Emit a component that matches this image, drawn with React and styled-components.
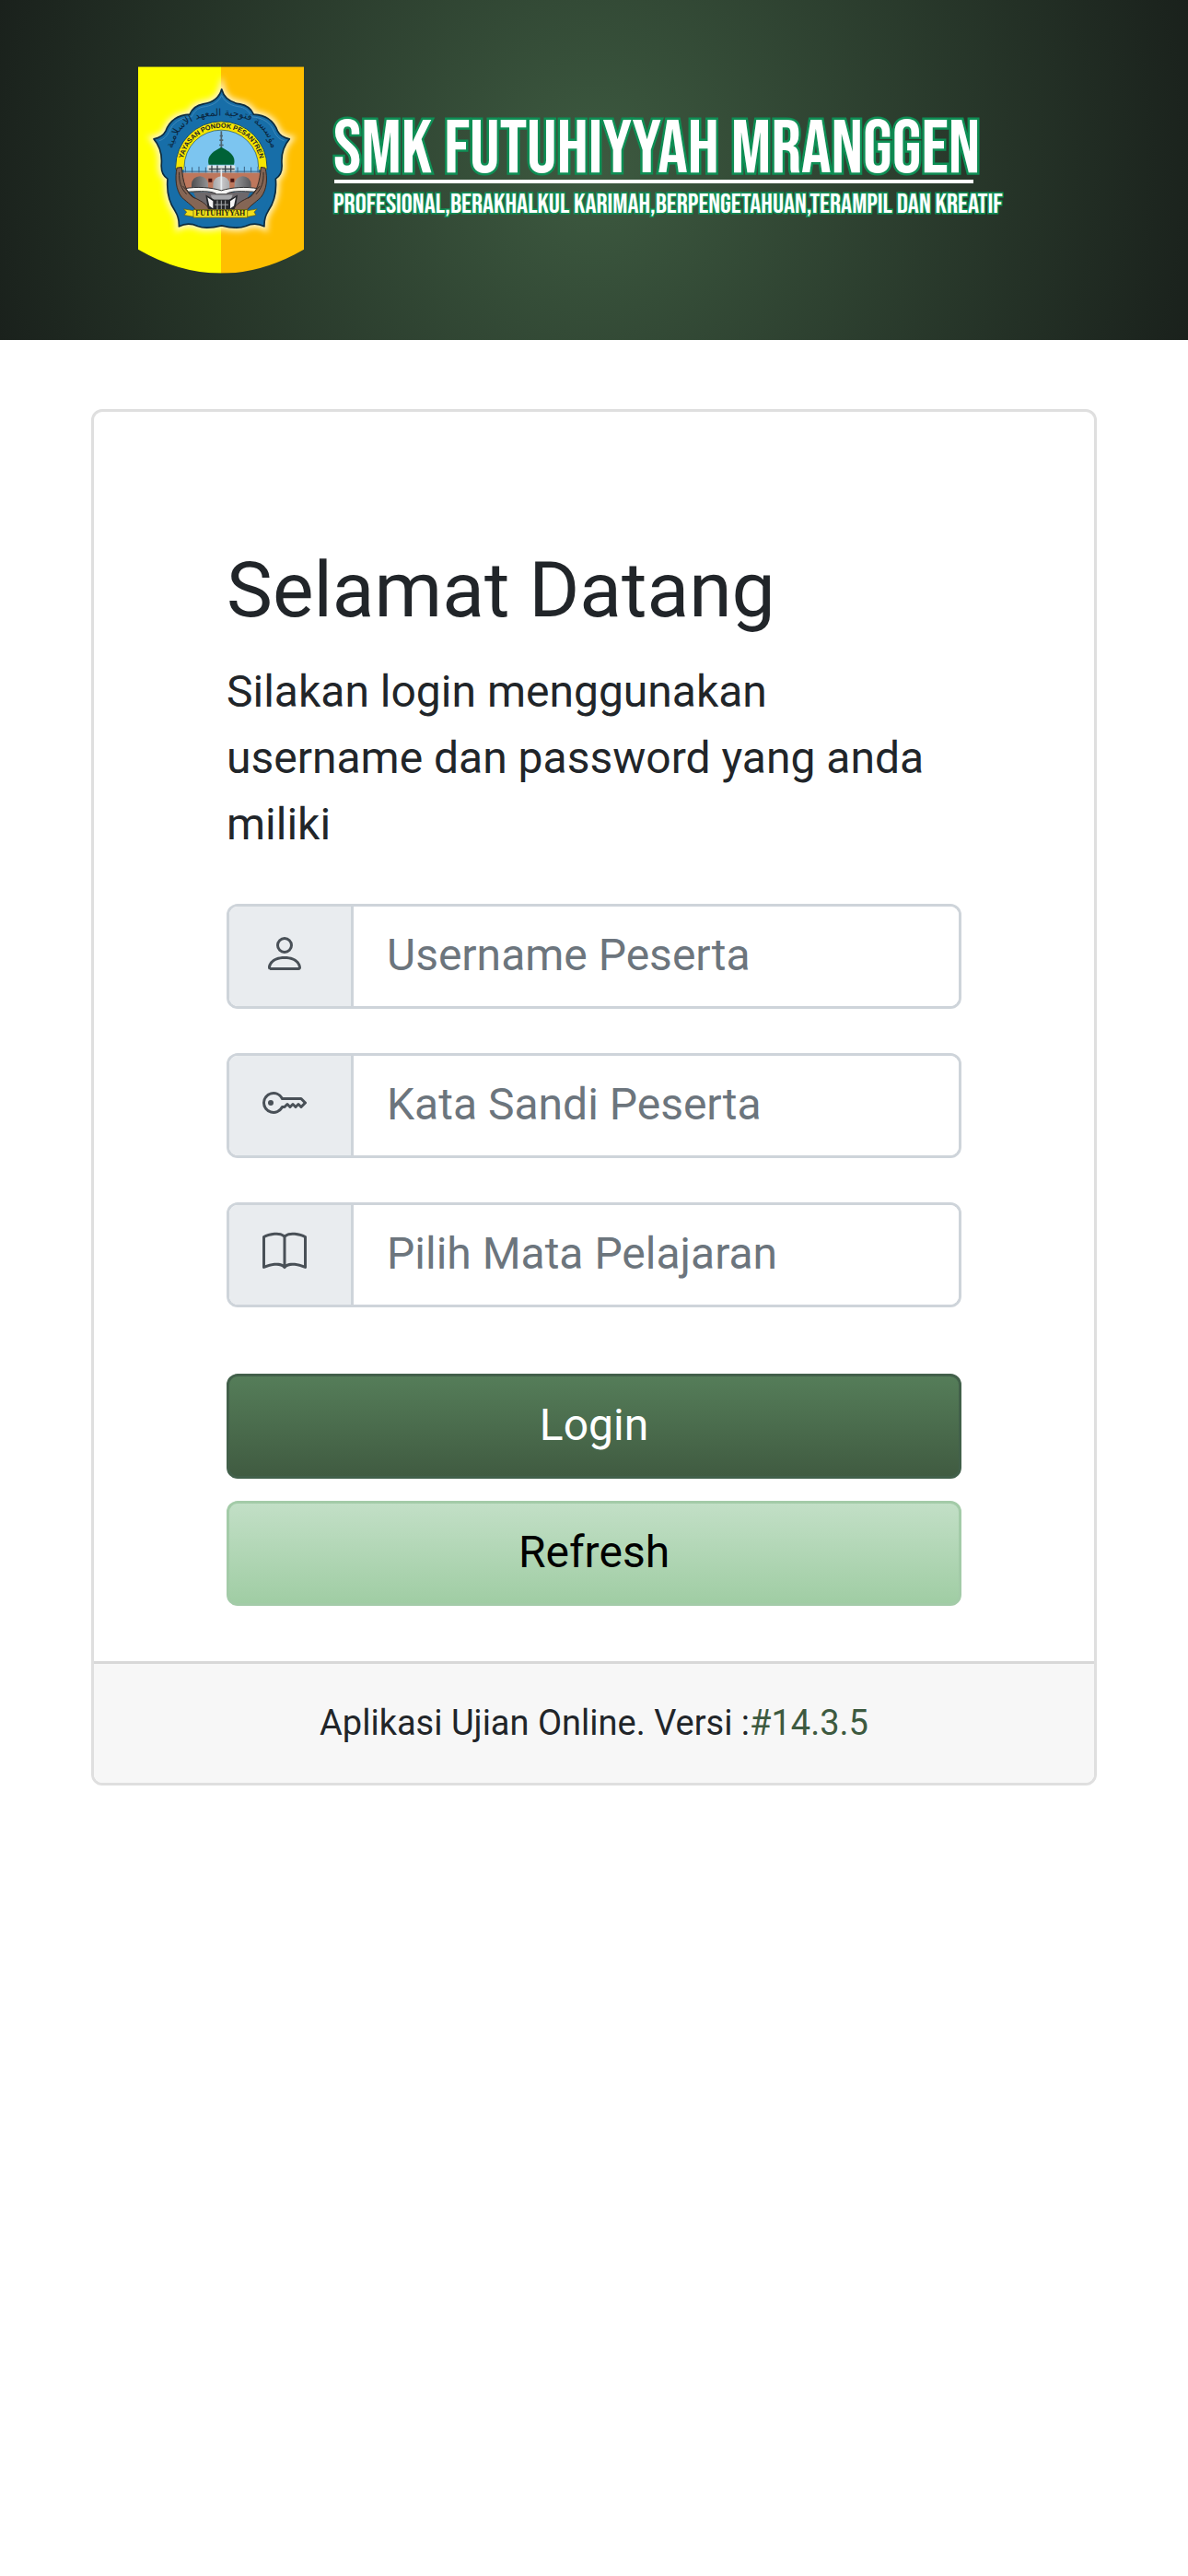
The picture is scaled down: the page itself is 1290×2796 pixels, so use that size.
import React from 'react';
import styled, { createGlobalStyle } from 'styled-components';
import { BsBook, BsKey, BsPerson } from 'react-icons/bs';

const GlobalStyle = createGlobalStyle`
  *,
  *::before,
  *::after {
    box-sizing: border-box;
  }

  body {
    margin: 0;
    background: #fff;
    color: #212529;
    font-family: Roboto, 'Liberation Sans', sans-serif;
    font-size: 48px;
    line-height: 72px;
  }
`;

const Header = styled.header`
  background: radial-gradient(circle, #3d5a40 0%, #1a211c 100%);
  display: flex;
  gap: 32px;
  padding: 72px 150px;
`;

const Emblem = styled.svg`
  display: block;
  flex: none;
  height: 225px;
  width: 180px;
`;

const Brand = styled.div`
  display: flex;
  flex-direction: column;
  font-family: 'Bebas Neue', 'Roboto Condensed', sans-serif;
  padding-top: 58px;
  white-space: nowrap;
`;

const SchoolName = styled.div`
  color: #fff;
  font-size: 81px;
  line-height: 65px;
  paint-order: stroke fill;
  -webkit-text-stroke: 5px #0e8f55;
`;

const Rule = styled.div`
  background: #fff;
  height: 4px;
  margin-left: 1px;
  width: 694px;
`;

const Motto = styled.div`
  color: #fff;
  font-size: 30px;
  line-height: 46px;
  paint-order: stroke fill;
  -webkit-text-stroke: 3px #0e8f55;
`;

const Card = styled.main`
  border: 3px solid #dfdfdf;
  border-radius: 12px;
  margin: 75px 99px 0;
  overflow: hidden;
`;

const LoginForm = styled.form`
  padding: 144px 144px 60px;
`;

const Title = styled.h1`
  font-size: 84px;
  font-weight: 400;
  line-height: 100px;
  margin: 0 0 24px;
`;

const Intro = styled.p`
  margin: 0 0 50px;
`;

const InputGroup = styled.div`
  border: 3px solid #ced4da;
  border-radius: 12px;
  display: flex;
  height: 114px;
  margin-bottom: 48px;
  overflow: hidden;
`;

const Addon = styled.label`
  background: #e9ecef;
  border-right: 3px solid #ced4da;
  color: #495057;
  flex: none;
  padding: 27px 0 0 36px;
  width: 135px;

  svg {
    display: block;
    height: 48px;
    width: 48px;
  }
`;

const Input = styled.input`
  background: #fff;
  border: 0;
  color: #212529;
  flex: 1;
  font: inherit;
  min-width: 0;
  outline: 0;
  padding: 0 36px 2px;

  &::placeholder {
    color: #6c757d;
    opacity: 1;
  }
`;

const Actions = styled.div`
  display: grid;
  gap: 24px;
  padding-top: 24px;
`;

const Button = styled.button`
  background: ${({ $primary }) =>
    $primary ? 'linear-gradient(#557d59, #405b41)' : 'linear-gradient(#c2dfc6, #a0cda4)'};
  border: 3px solid ${({ $primary }) => ($primary ? '#42604a' : '#a3cba8')};
  border-radius: 12px;
  color: ${({ $primary }) => ($primary ? '#fff' : '#000')};
  font: inherit;
  height: 114px;
  padding: 0 0 2px;
`;

const Footer = styled.footer`
  background: #f7f7f7;
  border-top: 3px solid #d8d8d8;
  font-size: 38px;
  line-height: 57px;
  padding: 36px 48px;
  text-align: center;
`;

const Version = styled.a`
  color: #3d5a40;
  text-decoration: none;
`;

const fields = [
  { id: 'username', type: 'text', placeholder: 'Username Peserta', Icon: BsPerson },
  { id: 'password', type: 'password', placeholder: 'Kata Sandi Peserta', Icon: BsKey },
  { id: 'mapel', type: 'text', placeholder: 'Pilih Mata Pelajaran', Icon: BsBook },
];

const star =
  'M332 140 C340 170 362 184 392 188 C414 192 428 202 436 222 C476 224 502 244 514 276 C522 292 536 299 553 302 C532 326 526 350 528 382 C530 404 524 422 508 432 C512 476 502 510 484 536 C474 552 470 568 471 587 C450 576 430 577 410 586 C384 596 356 590 332 584 C308 590 280 596 254 586 C234 577 214 576 193 587 C194 568 190 552 180 536 C162 510 152 476 156 432 C140 422 134 404 136 382 C138 350 132 326 111 302 C128 299 142 292 150 276 C162 244 188 224 228 222 C236 202 250 192 272 188 C302 184 324 170 332 140Z';

const SchoolEmblem = () => (
  <Emblem viewBox="60 66 540 674" role="img" aria-label="Yayasan Pondok Pesantren Futuhiyyah">
    <defs>
      <clipPath id="shield">
        <path d="M60 66H600V662Q330 818 60 662Z" />
      </clipPath>
      <filter id="glow" x="-20%" y="-20%" width="140%" height="140%">
        <feGaussianBlur stdDeviation="9" />
      </filter>
      <linearGradient id="arch">
        <stop offset="0" stopColor="#4e4e50" />
        <stop offset=".5" stopColor="#c9c9cb" />
        <stop offset="1" stopColor="#58585a" />
      </linearGradient>
      <path id="ring" d="M207 420A127 127 0 1 1 455 420" />
      <path id="script" d="M168 356C180 250 250 226 332 226S484 250 498 356" />
    </defs>

    <g clipPath="url(#shield)">
      <path fill="#ff0" d="M60 66H330V740H60Z" />
      <path fill="#ffbf00" d="M330 66H600V740H330Z" />
    </g>

    <path d={star} fill="#fff8d8" stroke="#fff4cc" strokeWidth="22" filter="url(#glow)" />
    <path d={star} fill="#176ea8" stroke="#0d2c3d" strokeWidth="5" strokeLinejoin="round" />
    <path
      d="M332 160C344 186 366 194 394 198C412 202 422 214 430 230C468 232 492 250 504 280C510 294 522 304 536 308M332 160C320 186 298 194 270 198C252 202 242 214 234 230C196 232 172 250 160 280C154 294 142 304 128 308"
      fill="none"
      stroke="#3d88ba"
      strokeWidth="3"
    />

    <text fill="#0b2740" fontFamily="'DejaVu Sans', sans-serif" fontSize="32" textAnchor="middle">
      <textPath href="#script" startOffset="50%">
        مؤسسة فتوحية المعهد الاسلامية
      </textPath>
    </text>

    <circle cx="331" cy="394" r="149" fill="#f7e600" stroke="#12496d" strokeWidth="3" />
    <circle cx="331" cy="394" r="121" fill="#7cc5f0" stroke="#1a4a66" strokeWidth="2" />
    <text fill="#16202a" fontFamily="'Liberation Sans', sans-serif" fontSize="22" fontWeight="700" textAnchor="middle">
      <textPath href="#ring" startOffset="50%">
        YAYASAN PONDOK PESANTREN
      </textPath>
    </text>

    {/* blue field around the hands */}
    <path fill="#176ea8" d="M180 402H482V500L466 548H196L180 500Z" />

    {/* minaret and dome */}
    <path d="M331 276V338M326 292H336M325 306H337M324 322H338" stroke="#4e6570" strokeWidth="5" />
    <path fill="#7cc5f0" d="M209 394H453V414H209Z" />
    <path fill="#dfe5e6" d="M286 388H376V412H286Z" />
    <path d="M290 400H374M300 388V412M318 388V412M344 388V412M362 388V412" stroke="#39434a" strokeWidth="4" />
    <path fill="#006237" d="M290 386C282 356 306 342 331 329C356 342 380 356 372 386Z" />
    <path
      d="M196 408H468M214 392V412M236 394V412M258 392V412M280 394V412M384 394V412M406 392V412M428 394V412M450 392V412"
      stroke="#3a6180"
      strokeWidth="3"
    />

    {/* facade with arches */}
    <path fill="#be775c" d="M190 412H474V470H190Z" />
    <path fill="#6d686b" d="M240 476H424L400 530H264Z" />
    <path
      fill="url(#arch)"
      d="M234 476V450A27 27 0 0 1 288 450V476ZM304 476V450A27 27 0 0 1 358 450V476ZM374 476V450A27 27 0 0 1 428 450V476Z"
    />
    <path fill="#4a1512" d="M289 431H301V443H289ZM361 431H373V443H361Z" />
    <path d="M331 400V472" stroke="#e8eef0" strokeWidth="5" />

    {/* open book and gate */}
    <path
      fill="#f4f4f2"
      stroke="#333"
      strokeWidth="3"
      d="M210 464C250 456 300 460 331 470C362 460 412 456 452 464L438 474C400 472 362 470 346 482H316C300 470 262 472 224 474Z"
    />
    <path fill="#a9a9ab" d="M296 484H368L362 500H302Z" />
    <path fill="#26282b" d="M280 484L308 500V536H288ZM384 484L356 500V536H376ZM308 500H356V534H308Z" />
    <path fill="#f6f6f6" d="M286 492L304 504V528L292 520ZM378 492L360 504V528L372 520Z" />
    <path d="M318 502V532M331 502V532M344 502V532M310 516H354" stroke="#a8abad" strokeWidth="3" />

    {/* hands */}
    <g fill="#856655" stroke="#362a24" strokeWidth="3" strokeLinejoin="round">
      <path d="M186 396C180 430 182 466 202 492C222 510 242 524 246 532H290C286 514 262 502 236 490C216 474 206 444 202 394Z" />
      <path d="M474 396C482 430 480 466 460 492C440 510 420 524 416 532H372C376 514 400 502 426 490C446 474 456 444 460 394Z" />
      <path d="M194 410C192 440 200 464 218 482M206 456L244 496M468 410C470 440 462 464 444 482M456 456L418 496" fill="none" />
    </g>

    {/* ribbon */}
    <path
      fill="#f1df18"
      stroke="#5a5514"
      strokeWidth="2"
      d="M208 530L244 536V556L210 550L218 540ZM448 530L414 536V556L444 550L438 540Z"
    />
    <path fill="#f1df18" stroke="#5a5514" strokeWidth="2" d="M240 532H416V558H240Z" />
    <text
      x="328"
      y="553"
      fill="#1c1c14"
      fontFamily="'Liberation Serif', serif"
      fontSize="24"
      fontWeight="700"
      textAnchor="middle"
    >
      FUTUHIYYAH
    </text>
  </Emblem>
);

const App = () => (
  <>
    <GlobalStyle />
    <Header>
      <SchoolEmblem />
      <Brand>
        <SchoolName>SMK FUTUHIYYAH MRANGGEN</SchoolName>
        <Rule />
        <Motto>PROFESIONAL,BERAKHALKUL KARIMAH,BERPENGETAHUAN,TERAMPIL DAN KREATIF</Motto>
      </Brand>
    </Header>

    <Card>
      <LoginForm onSubmit={(e) => e.preventDefault()}>
        <Title>Selamat Datang</Title>
        <Intro>Silakan login menggunakan username dan password yang anda miliki</Intro>

        {fields.map(({ id, type, placeholder, Icon }) => (
          <InputGroup key={id}>
            <Addon htmlFor={id} aria-label={placeholder}>
              <Icon aria-hidden="true" />
            </Addon>
            <Input id={id} name={id} type={type} placeholder={placeholder} autoComplete="off" />
          </InputGroup>
        ))}

        <Actions>
          <Button type="submit" $primary>
            Login
          </Button>
          <Button type="button">Refresh</Button>
        </Actions>
      </LoginForm>

      <Footer>
        Aplikasi Ujian Online. Versi :<Version href="#versi">#14.3.5</Version>
      </Footer>
    </Card>
  </>
);

export default App;
